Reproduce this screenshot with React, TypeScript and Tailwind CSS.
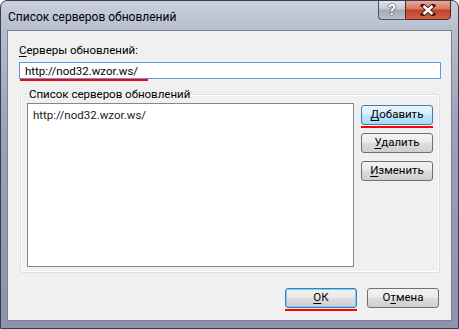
import React from "react";

const font = { fontFamily: 'Roboto, "Liberation Sans", Arial, sans-serif' };

function Acc({ k, rest }: { k: string; rest: string }) {
  return (
    <span>
      <span className="underline underline-offset-2">{k}</span>
      {rest}
    </span>
  );
}

function Btn({
  children,
  hot,
  def,
  marked,
}: {
  children: React.ReactNode;
  hot?: boolean;
  def?: boolean;
  marked?: boolean;
}) {
  let face =
    "border-[#707070] bg-[linear-gradient(#f2f2f2_0%,#ebebeb_45%,#dddddd_50%,#cfcfcf_100%)]";
  if (hot)
    face =
      "border-[#3c7fb1] bg-[linear-gradient(#eaf6fd_0%,#d9f0fc_45%,#bee6fd_50%,#a7d9f5_100%)]";
  if (def)
    face =
      "border-[#3c7fb1] shadow-[inset_0_0_0_1px_#6fd1f8] bg-[linear-gradient(#f2f2f2_0%,#ebebeb_45%,#dddddd_50%,#cfcfcf_100%)]";
  return (
    <div className="flex flex-col">
      <div
        className={`w-[72px] h-[20px] rounded-[3px] border flex items-center justify-center text-[11.5px] text-black ${face}`}
      >
        {children}
      </div>
      <div className={`h-[2px] mt-[1px] ${marked ? "bg-[#ff0000]" : ""}`} />
    </div>
  );
}

export default function App() {
  return (
    <div
      className="w-[459px] h-[329px] overflow-hidden rounded-t-[7px] border border-[#3a3d4e] bg-[linear-gradient(180deg,#c9cfdc_0%,#b4bccd_10%,#9aa1b8_40%,#8d92ad_100%)] flex flex-col"
      style={font}
    >
      <div className="h-[29px] flex justify-between items-start pl-[7px] pr-[7px]">
        <div className="pt-[8px] text-[12px] text-black leading-[16px]">
          Список серверов обновлений
        </div>
        <div className="flex -mt-px">
          <div className="w-[27px] h-[20px] rounded-bl-[4px] border border-[#4b5063] border-r-0 bg-[linear-gradient(#dfe3ec_0%,#c3c9d6_45%,#a3aabb_50%,#b9c0cf_100%)] flex items-center justify-center text-white font-bold text-[15px] [text-shadow:0_0_2px_#333,0_0_1px_#333]">
            ?
          </div>
          <div className="w-[46px] h-[20px] rounded-br-[4px] border border-[#4b2a24] bg-[linear-gradient(#e9a99c_0%,#d8755f_45%,#c2422a_50%,#d15f45_100%)] flex items-center justify-center">
            <svg width="16" height="12" viewBox="0 0 16 12">
              <path d="M3 1.5 L13 10.5 M13 1.5 L3 10.5" stroke="#4a1a12" strokeWidth="4.5" strokeLinecap="square" />
              <path d="M3.5 2 L12.5 10 M12.5 2 L3.5 10" stroke="#ffffff" strokeWidth="2.6" strokeLinecap="butt" />
            </svg>
          </div>
        </div>
      </div>

      <div className="mx-[6px] mb-[7px] flex-1 border border-[#7d8293] bg-[#f0f0f0] flex flex-col pl-[11px] pr-[10px] text-[11.5px] text-black">
        <div className="mt-[12px] leading-[15px]">
          <Acc k="С" rest="ерверы обновлений:" />
        </div>
        <div className="mt-[4px] w-[422px] h-[17px] border border-[#569de5] bg-white flex items-center pl-[5px]">
          <span className="leading-[14px]">http://nod32.wzor.ws/</span>
        </div>
        <div className="ml-[1px] w-[128px] h-[2px] bg-[#ff0000] mt-0" />

        <fieldset className="mt-[6px] ml-px w-[420px] h-[186px] border border-[#d5dfe5] rounded-[3px] shadow-[inset_0_0_0_1px_#ffffff] px-[6px] pt-[1px]">
          <legend className="ml-0 px-[2px] leading-[14px]">
            Список серверов обновлений
          </legend>
          <div className="flex gap-[7px] mt-[1px]">
            <div className="w-[327px] h-[164px] border border-[#828790] bg-white pl-[5px] pt-[4px] text-[#1a1a1a] leading-[15px]">
              http://nod32.wzor.ws/
            </div>
            <div className="flex flex-col gap-[5px] pt-[2px]">
              <Btn hot marked>
                <Acc k="Д" rest="обавить" />
              </Btn>
              <Btn>
                <Acc k="У" rest="далить" />
              </Btn>
              <Btn>
                <Acc k="И" rest="зменить" />
              </Btn>
            </div>
          </div>
        </fieldset>

        <div className="flex justify-end gap-[10px] mt-[15px] pr-[2px]">
          <Btn def marked>
            <Acc k="О" rest="К" />
          </Btn>
          <Btn>
            <span>
              О<span className="underline underline-offset-2">т</span>мена
            </span>
          </Btn>
        </div>
      </div>
    </div>
  );
}
